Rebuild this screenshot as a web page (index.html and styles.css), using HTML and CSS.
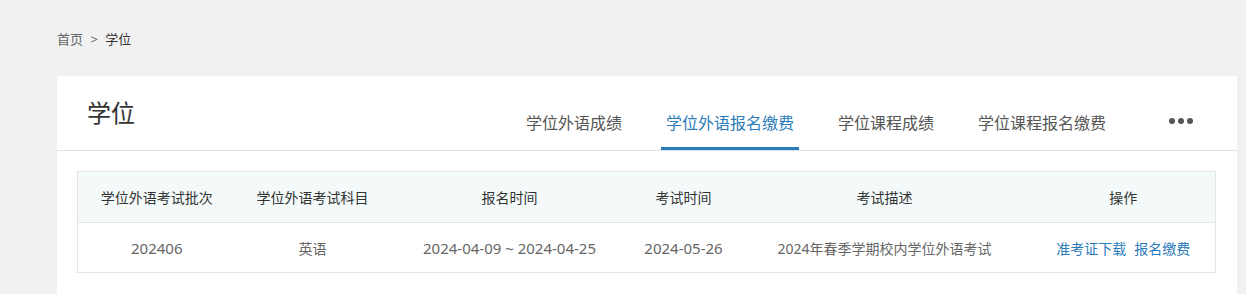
FILE: index.html
```html
<!DOCTYPE html>
<html lang="zh-CN">
<head>
  <meta charset="UTF-8" />
  <title>学位</title>
  <meta name="viewport" content="width=device-width, initial-scale=1.0" />
  <link rel="stylesheet" href="styles.css">
</head>
<body>
  <div class="crumb">
    <a href="#">首页</a>
    <span class="sep">&gt;</span>
    <span class="current">学位</span>
  </div>

  <div class="card">
    <div class="card-head">
      <h2>学位</h2>
      <ul class="tabs">
        <li>学位外语成绩</li>
        <li class="active">学位外语报名缴费</li>
        <li>学位课程成绩</li>
        <li>学位课程报名缴费</li>
      </ul>
      <div class="more"><i></i><i></i><i></i></div>
    </div>

    <div class="card-body">
      <table class="list">
        <colgroup>
          <col style="width:158px">
          <col style="width:154px">
          <col style="width:240px">
          <col style="width:108px">
          <col style="width:294px">
          <col>
        </colgroup>
        <thead>
          <tr>
            <th>学位外语考试批次</th>
            <th>学位外语考试科目</th>
            <th>报名时间</th>
            <th>考试时间</th>
            <th>考试描述</th>
            <th>操作</th>
          </tr>
        </thead>
        <tbody>
          <tr>
            <td class="num">202406</td>
            <td>英语</td>
            <td class="num">2024-04-09 ~ 2024-04-25</td>
            <td class="num">2024-05-26</td>
            <td>2024年春季学期校内学位外语考试</td>
            <td><a href="#">准考证下载</a><a href="#">报名缴费</a></td>
          </tr>
        </tbody>
      </table>
    </div>
  </div>
</body>
</html>
```

FILE: styles.css
```css
body { margin: 0; padding: 28px 9px 0 57px; background: #f1f1f1; font-family: "Noto Sans", "Noto Sans CJK SC", sans-serif; color: #333; }
a { text-decoration: none; }

.crumb { font-size: 13px; line-height: 22px; }
.crumb a { color: #666; }
.crumb .sep { color: #666; margin: 0 4px; }
.crumb .current { color: #333; }

.card { margin-top: 26px; background: #fff; min-height: 240px; }
.card-head { display: flex; align-items: flex-end; height: 74px; border-bottom: 1px solid #e2e2e2; }
.card-head h2 { align-self: flex-start; margin: 19px 0 0 30px; font-size: 24px; line-height: 36px; font-weight: normal; color: #333; }

.tabs { display: flex; list-style: none; margin: 0 0 0 auto; padding: 0; }
.tabs li { margin: 0 17px; padding: 0 5px 13px; font-size: 16px; line-height: 22px; color: #555; border-bottom: 3px solid transparent; cursor: pointer; }
.tabs li.active { color: #2a7bb9; border-bottom-color: #2a7bb9; }

.more { align-self: flex-start; display: flex; gap: 3px; margin: 42px 44px 0 41px; }
.more i { width: 6px; height: 6px; border-radius: 50%; background: #555; }

.card-body { padding: 20px 21px 20px 20px; }
.list { width: 100%; table-layout: fixed; border-collapse: collapse; border: 1px solid #e4e4e4; font-size: 14px; }
.list th { height: 50px; padding: 0; background: #f4fafa; font-weight: normal; color: #333; border-bottom: 1px solid #e4e4e4; }
.list td { height: 49px; padding: 0; text-align: center; color: #666; }
.list td.num { font-size: 15px; }
.list td a { color: #2a7bb9; margin: 0 4px; }
```
